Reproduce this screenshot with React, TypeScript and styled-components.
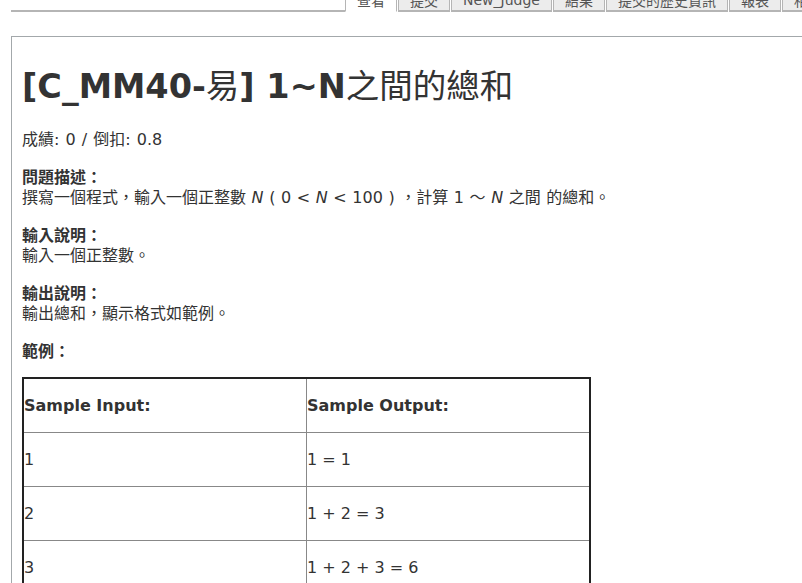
import React from "react";
import styled, { createGlobalStyle } from "styled-components";

const Global = createGlobalStyle`
  html, body { margin: 0; padding: 0; background: #fff; }
  body {
    font-family: "DejaVu Sans", Verdana, "Noto Sans CJK TC", sans-serif;
    color: #333;
    overflow: hidden;
  }
`;

const Page = styled.div`
  width: 802px;
  height: 583px;
  overflow: hidden;
`;

const TabBar = styled.div`
  display: flex;
  align-items: flex-end;
  margin: -13px 0 0 11px;
  height: 25px;
`;

const TabSpacer = styled.div`
  width: 334px;
  flex: none;
  border-bottom: 2px solid #b5b5b5;
  height: 0;
`;

const Tab = styled.div<{ $active?: boolean }>`
  flex: none;
  height: 24px;
  box-sizing: border-box;
  padding: 0 11px;
  display: flex;
  align-items: center;
  font-size: 14px;
  color: #555;
  background: ${(p) => (p.$active ? "#fff" : "#ececec")};
  border: 1px solid #b5b5b5;
  border-bottom: ${(p) => (p.$active ? "1px solid #fff" : "2px solid #b5b5b5")};
  margin-right: 1px;
  white-space: nowrap;
`;

const Box = styled.div`
  margin: 24px 0 0 11px;
  border-top: 1px solid #a3a8ab;
  border-left: 1px solid #a3a8ab;
  padding: 0 0 0 10px;
  height: 600px;
`;

const Title = styled.h1`
  margin: 0;
  padding-top: 31px;
  font-size: 33.5px;
  line-height: 38px;
  height: 38px;
  font-weight: bold;
  color: #333;
  white-space: nowrap;
`;

const CjkTitle = styled.span`
  font-weight: normal;
`;

const Score = styled.div`
  margin-top: 23px;
  font-size: 16px;
  line-height: 21px;
  height: 21px;
  word-spacing: 1px;
`;

const Section = styled.div`
  display: grid;
  grid-auto-rows: 21px;
  margin-top: 16px;
  font-size: 16px;
  line-height: 21px;
  &:first-of-type {
    margin-top: 17px;
  }
`;

const Label = styled.div`
  font-weight: bold;
  font-family: "Noto Sans CJK TC", sans-serif;
  overflow: hidden;
`;

const Text = styled.div`
  white-space: nowrap;
  overflow: hidden;
  word-spacing: 0.5px;
`;

const Var = styled.i``;

const Table = styled.table`
  margin-top: 16px;
  width: 569px;
  border-collapse: collapse;
  border: 2px solid #222;
  font-size: 16px;
  table-layout: fixed;
`;

const Th = styled.th`
  text-align: left;
  font-weight: bold;
  height: 53px;
  padding: 0;
  border: 1px solid #888;
`;

const Td = styled.td`
  height: 53px;
  padding: 0;
  border: 1px solid #888;
`;

const tabs = ["查看", "提交", "New_Judge", "結果", "提交的歷史資訊", "報表", "相關資訊"];

const rows = [
  ["1", "1 = 1"],
  ["2", "1 + 2 = 3"],
  ["3", "1 + 2 + 3 = 6"],
];

export default function App() {
  return (
    <Page>
      <Global />
      <TabBar>
        <TabSpacer />
        {tabs.map((t, i) => (
          <Tab key={t} $active={i === 0}>
            {t}
          </Tab>
        ))}
      </TabBar>
      <Box>
        <Title>
          [C_MM40-<CjkTitle>易</CjkTitle>] 1~N<CjkTitle>之間的總和</CjkTitle>
        </Title>
        <Score>成績: 0 / 倒扣: 0.8</Score>
        <Section>
          <Label>問題描述：</Label>
          <Text>
            撰寫一個程式，輸入一個正整數 <Var>N</Var> ( 0 &lt; <Var>N</Var> &lt; 100 ) ，計算 1 ～ <Var>N</Var> 之間 的總和。
          </Text>
        </Section>
        <Section>
          <Label>輸入說明：</Label>
          <Text>輸入一個正整數。</Text>
        </Section>
        <Section>
          <Label>輸出說明：</Label>
          <Text>輸出總和，顯示格式如範例。</Text>
        </Section>
        <Section>
          <Label>範例：</Label>
        </Section>
        <Table>
          <thead>
            <tr>
              <Th>Sample Input:</Th>
              <Th>Sample Output:</Th>
            </tr>
          </thead>
          <tbody>
            {rows.map((r) => (
              <tr key={r[0]}>
                <Td>{r[0]}</Td>
                <Td>{r[1]}</Td>
              </tr>
            ))}
          </tbody>
        </Table>
      </Box>
    </Page>
  );
}
